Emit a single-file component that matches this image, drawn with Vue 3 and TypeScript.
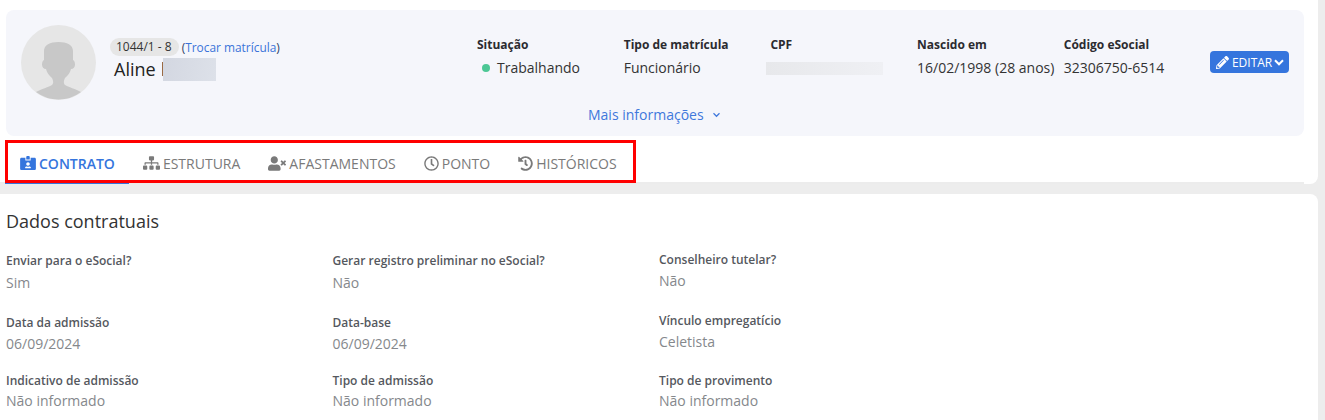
<template>
  <div class="page">
    <section class="top">
      <div class="profile">
        <div class="profile__person">
          <svg class="avatar" viewBox="0 0 75 75">
            <circle cx="37.5" cy="37.5" r="37.5" fill="#e6e6e6" />
            <path
              d="M15 67C20 64 28 62 31 60C33 58 32 55 31 53C28 50 26 48 25 44C22.5 44 21 42 21 39.5C21 37 22 35.5 23 35V26C23 20 29 17 37.5 17C46 17 52 20 52 26V35C53 35.5 54 37 54 39.5C54 42 52.5 44 50 44C49 48 47 50 44 53C43 55 42 58 44 60C47 62 55 64 60 67A37.5 37.5 0 0 1 15 67Z"
              fill="#c8c8c8"
            />
          </svg>
          <div class="person">
            <div class="person__reg">
              <span class="chip">1044/1 - 8</span>
              <span class="swap">(<a>Trocar matrícula</a>)</span>
            </div>
            <div class="person__name">Aline <span class="blur blur--name"></span></div>
          </div>
        </div>

        <div class="info">
          <div v-for="item in infoItems" :key="item.label" class="info__item" :style="{ width: item.width + 'px' }">
            <div class="info__label">{{ item.label }}</div>
            <div v-if="item.label === 'Situação'" class="info__value info__value--status">
              <span class="dot"></span>{{ item.value }}
            </div>
            <div v-else-if="item.label === 'CPF'" class="info__value"><span class="blur blur--cpf"></span></div>
            <div v-else class="info__value">{{ item.value }}</div>
          </div>
          <button class="edit" type="button">
            <svg class="edit__pen" viewBox="0 0 512 512">
              <path fill="currentColor" d="M497.9 142.1l-46.1 46.1c-4.7 4.7-12.3 4.7-17 0l-111-111c-4.7-4.7-4.7-12.3 0-17l46.1-46.1c18.7-18.7 49.1-18.7 67.9 0l60.1 60.1c18.8 18.7 18.8 49.1 0 67.9zM284.2 99.8L21.6 362.4.4 483.9c-2.9 16.4 11.4 30.6 27.8 27.8l121.5-21.3 262.6-262.6c4.7-4.7 4.7-12.3 0-17l-111-111c-4.8-4.7-12.4-4.7-17.1 0zM124.1 339.9c-5.5-5.5-5.5-14.3 0-19.8l154-154c5.5-5.5 14.3-5.5 19.8 0s5.5 14.3 0 19.8l-154 154c-5.5 5.5-14.3 5.5-19.8 0zM88 424h48v36.3l-64.5 11.3-31.1-31.1L51.7 376H88v48z" />
            </svg>
            <span>EDITAR</span>
            <svg class="edit__chev" viewBox="0 0 10 7">
              <path d="M1 1.3l4 4 4-4" fill="none" stroke="currentColor" stroke-width="2" />
            </svg>
          </button>
        </div>

        <div class="more">
          Mais informações
          <svg class="more__chev" viewBox="0 0 10 7">
            <path d="M1.5 1.5L5 5l3.5-3.5" fill="none" stroke="currentColor" stroke-width="1.4" />
          </svg>
        </div>
      </div>

      <nav class="tabs">
        <a v-for="(tab, i) in tabs" :key="tab.label" class="tab" :class="{ 'tab--active': i === 0 }">
          <svg class="tab__icon" :width="tab.w" :height="tab.h" :viewBox="tab.box">
            <path v-for="(d, j) in tab.paths" :key="j" :d="d" fill="currentColor" />
          </svg>
          {{ tab.label }}
        </a>
        <div class="tabs__mark"></div>
      </nav>
    </section>

    <section class="details">
      <h2 class="details__title">Dados contratuais</h2>
      <div class="fields">
        <div v-for="col in columns" :key="col.id" class="fields__col" :class="'fields__col--' + col.id">
          <div v-for="field in col.fields" :key="field.label" class="field">
            <div class="field__label">{{ field.label }}</div>
            <div class="field__value">{{ field.value }}</div>
          </div>
        </div>
      </div>
    </section>
  </div>
</template>

<script setup lang="ts">
const infoItems = [
  { label: 'Situação', value: 'Trabalhando', width: 146.7 },
  { label: 'Tipo de matrícula', value: 'Funcionário', width: 146.7 },
  { label: 'CPF', value: '', width: 146.7 },
  { label: 'Nascido em', value: '16/02/1998 (28 anos)', width: 146.7 },
  { label: 'Código eSocial', value: '32306750-6514', width: 146.2 }
]

const tabs = [
  {
    label: 'CONTRATO',
    w: 16,
    h: 14,
    box: '0 0 576 512',
    paths: [
      'M528 64H384v96H192V64H48C21.5 64 0 85.5 0 112v352c0 26.5 21.5 48 48 48h480c26.5 0 48-21.5 48-48V112c0-26.5-21.5-48-48-48zM288 224c35.3 0 64 28.7 64 64s-28.7 64-64 64-64-28.7-64-64 28.7-64 64-64zm93.3 224H194.7c-10.4 0-18.8-10-15.6-19.8 8.3-25.6 32.4-44.2 60.9-44.2h8.2c12.3 5.1 25.7 8 39.8 8s27.6-2.9 39.8-8h8.2c28.4 0 52.5 18.5 60.9 44.2 3.2 9.8-5.2 19.8-15.6 19.8zM352 32c0-17.7-14.3-32-32-32h-64c-17.7 0-32 14.3-32 32v96h128V32z'
    ]
  },
  {
    label: 'ESTRUTURA',
    w: 17,
    h: 14,
    box: '0 0 640 512',
    paths: [
      'M128 352H32c-17.67 0-32 14.33-32 32v96c0 17.67 14.33 32 32 32h96c17.67 0 32-14.33 32-32v-96c0-17.67-14.33-32-32-32zm-24-80h192v48h48v-48h192v48h48v-57.59c0-21.17-17.23-38.41-38.41-38.41H344v-64h40c17.67 0 32-14.33 32-32V32c0-17.67-14.33-32-32-32H256c-17.67 0-32 14.33-32 32v96c0 17.67 14.33 32 32 32h40v64H94.41C73.23 224 56 241.23 56 262.41V320h48v-48zm264 80h-96c-17.67 0-32 14.33-32 32v96c0 17.67 14.33 32 32 32h96c17.67 0 32-14.33 32-32v-96c0-17.67-14.33-32-32-32zm240 0h-96c-17.67 0-32 14.33-32 32v96c0 17.67 14.33 32 32 32h96c17.67 0 32-14.33 32-32v-96c0-17.67-14.33-32-32-32z'
    ]
  },
  {
    label: 'AFASTAMENTOS',
    w: 18,
    h: 15,
    box: '0 0 640 512',
    paths: [
      'M224 256c70.7 0 128-57.3 128-128S294.7 0 224 0 96 57.3 96 128s57.3 128 128 128zm89.6 32h-16.7c-22.2 10.2-46.9 16-72.9 16s-50.6-5.8-72.9-16h-16.7C60.2 288 0 348.2 0 422.4V464c0 26.5 21.5 48 48 48h352c26.5 0 48-21.5 48-48v-41.6c0-74.2-60.2-134.4-134.4-134.4z',
      'M589.6 240l45.6-45.6c6.3-6.3 6.3-16.5 0-22.8l-22.8-22.8c-6.3-6.3-16.5-6.3-22.8 0L544 194.4l-45.6-45.6c-6.3-6.3-16.5-6.3-22.8 0l-22.8 22.8c-6.3 6.3-6.3 16.5 0 22.8l45.6 45.6-45.6 45.6c-6.3 6.3-6.3 16.5 0 22.8l22.8 22.8c6.3 6.3 16.5 6.3 22.8 0l45.6-45.6 45.6 45.6c6.3 6.3 16.5 6.3 22.8 0l22.8-22.8c6.3-6.3 6.3-16.5 0-22.8L589.6 240z'
    ]
  },
  {
    label: 'PONTO',
    w: 15,
    h: 15,
    box: '0 0 512 512',
    paths: [
      'M256 8C119 8 8 119 8 256s111 248 248 248 248-111 248-248S393 8 256 8zm0 448c-110.5 0-200-89.5-200-200S145.5 56 256 56s200 89.5 200 200-89.5 200-200 200zm61.8-104.4l-84.9-61.7c-3.1-2.3-4.9-5.9-4.9-9.7V116c0-6.6 5.4-12 12-12h32c6.6 0 12 5.4 12 12v141.7l66.8 48.6c5.4 3.9 6.5 11.4 2.6 16.8L334.6 349c-3.9 5.3-11.4 6.5-16.8 2.6z'
    ]
  },
  {
    label: 'HISTÓRICOS',
    w: 15,
    h: 15,
    box: '0 0 512 512',
    paths: [
      'M504 255.531c.253 136.64-111.18 248.372-247.82 248.468-59.015.042-113.223-20.53-155.822-54.911-11.077-8.94-11.905-25.541-1.839-35.607l11.267-11.267c8.609-8.609 22.353-9.551 31.891-1.984C173.062 425.135 212.781 440 256 440c101.705 0 184-82.311 184-184 0-101.705-82.311-184-184-184-48.814 0-93.149 18.969-126.068 49.932l50.754 50.754c10.08 10.08 2.941 27.314-11.313 27.314H24c-8.837 0-16-7.163-16-16V38.627c0-14.254 17.234-21.393 27.314-11.314l49.372 49.372C129.209 34.136 189.552 8 256 8c136.81 0 247.747 110.78 248 247.531zm-180.912 78.784l9.823-12.63c8.138-10.463 6.253-25.542-4.21-33.679L288 256.349V152c0-13.255-10.745-24-24-24h-16c-13.255 0-24 10.745-24 24v135.651l65.409 50.874c10.463 8.137 25.541 6.253 33.679-4.21z'
    ]
  }
]

const columns = [
  {
    id: 'a',
    fields: [
      { label: 'Enviar para o eSocial?', value: 'Sim' },
      { label: 'Data da admissão', value: '06/09/2024' },
      { label: 'Indicativo de admissão', value: 'Não informado' }
    ]
  },
  {
    id: 'b',
    fields: [
      { label: 'Gerar registro preliminar no eSocial?', value: 'Não' },
      { label: 'Data-base', value: '06/09/2024' },
      { label: 'Tipo de admissão', value: 'Não informado' }
    ]
  },
  {
    id: 'c',
    fields: [
      { label: 'Conselheiro tutelar?', value: 'Não' },
      { label: 'Vínculo empregatício', value: 'Celetista' },
      { label: 'Tipo de provimento', value: 'Não informado' }
    ]
  }
]
</script>

<style scoped>
.page {
  width: 1325px;
  height: 420px;
  overflow: hidden;
  background: #ededed;
  font-family: "Open Sans", "Noto Sans", sans-serif;
  color: #2f2f33;
}

.top {
  width: 1318px;
  height: 184px;
  padding: 10px 14px 0 6px;
  box-sizing: border-box;
  background: #fff;
  border-radius: 0 0 8px 0;
}

.profile {
  position: relative;
  height: 126px;
  padding: 15px 15px 0 15px;
  box-sizing: border-box;
  background: #f5f6fb;
  border-radius: 8px;
  display: flex;
  align-items: flex-start;
}

.profile__person {
  flex: none;
  width: 456px;
  display: flex;
  gap: 14px;
}

.avatar {
  width: 75px;
  height: 75px;
  flex: none;
}

.person {
  padding-top: 13px;
}

.person__reg {
  display: flex;
  align-items: center;
  gap: 3px;
  font-size: 12px;
  line-height: 18px;
}

.chip {
  padding: 0 7px 0 6px;
  background: #e6e6e6;
  border-radius: 9px;
  color: #333;
}

.swap {
  color: #2f3d63;
  font-size: 11.9px;
}

.swap a {
  color: #3b74d9;
}

.person__name {
  display: flex;
  align-items: center;
  gap: 7px;
  margin: 2px 0 0 4px;
  font-size: 18px;
  line-height: 23px;
  color: #222;
}

.blur {
  display: block;
}

.blur--name {
  position: relative;
  width: 53px;
  height: 23px;
  background: linear-gradient(100deg, #d3d7e1, #dde1e9);
}

.blur--name::before {
  content: "";
  position: absolute;
  left: -1px;
  top: 4px;
  width: 1px;
  height: 14px;
  background: #9a6a44;
}

.blur--cpf {
  width: 117px;
  height: 13px;
  margin: 9px 0 0 -4px;
  background: linear-gradient(90deg, #e7e8eb, #eff0f4);
}

.info {
  flex: none;
  display: flex;
  align-items: flex-start;
  padding-top: 12px;
}

.info__item {
  flex: none;
}

.info__label {
  font-size: 12px;
  line-height: 16px;
  font-weight: 700;
  color: #2b2b30;
}

.info__value {
  margin-top: 5px;
  font-size: 14px;
  line-height: 20px;
  color: #333;
}

.info__value--status {
  display: flex;
  align-items: center;
  gap: 7px;
  margin-left: 5px;
}

.dot {
  width: 8px;
  height: 8px;
  border-radius: 50%;
  background: #4cc795;
}

.edit {
  display: flex;
  align-items: center;
  gap: 2px;
  height: 22px;
  margin-top: 14px;
  padding: 0 5px 0 6px;
  border: 0;
  border-radius: 4px;
  background: #3575dd;
  color: #fff;
  font-family: inherit;
  font-size: 12px;
}

.edit__pen {
  width: 13px;
  height: 13px;
  margin-right: 1px;
}

.edit__chev {
  width: 10px;
  height: 7px;
}

.more {
  position: absolute;
  left: 582px;
  top: 95px;
  display: flex;
  align-items: center;
  gap: 8px;
  font-size: 14px;
  line-height: 20px;
  color: #3f78dc;
}

.more__chev {
  width: 9px;
  height: 6px;
}

.tabs {
  position: relative;
  display: flex;
  gap: 28px;
  height: 48px;
  margin-left: -6px;
  padding: 8px 0 0 20px;
  box-sizing: border-box;
  align-items: center;
  border-bottom: 2px solid #ececec;
}

.tabs__mark {
  position: absolute;
  left: 5px;
  top: 4px;
  width: 631px;
  height: 43px;
  box-sizing: border-box;
  border: 3px solid #ff0000;
}

.tab {
  display: flex;
  align-items: center;
  gap: 3px;
  font-size: 14px;
  color: #7a7a7a;
  white-space: nowrap;
}

.tab--active {
  color: #3575dd;
  font-weight: 600;
}

.tab--active::after {
  content: "";
  position: absolute;
  left: 5px;
  bottom: -2px;
  width: 124px;
  height: 2px;
  background: #3575dd;
}

.tab__icon {
  flex: none;
}

.details {
  width: 1318px;
  height: 226px;
  margin-top: 10px;
  padding: 15px 6px 0;
  box-sizing: border-box;
  background: #fff;
  border-radius: 0 8px 0 0;
}

.details__title {
  margin: 0;
  font-size: 18px;
  line-height: 24px;
  font-weight: 400;
  color: #333;
}

.fields {
  display: grid;
  grid-template-columns: 326.5px 326.5px 326.5px;
  margin-top: 19px;
}

.fields__col--a,
.fields__col--b {
  padding-top: 1px;
}

.field:nth-child(2) {
  margin-top: 22px;
}

.field:nth-child(3) {
  margin-top: 19px;
}

.fields__col--c .field:nth-child(3) {
  margin-top: 21px;
}

.field__label {
  font-size: 12px;
  line-height: 16px;
  font-weight: 600;
  color: #55585e;
}

.field__value {
  margin-top: 4px;
  font-size: 14px;
  line-height: 20px;
  color: #85888c;
}

.field:nth-child(2) .field__value {
  margin-top: 3px;
}

.field:nth-child(3) .field__value {
  margin-top: 2px;
}

.fields__col--c .field:nth-child(1) .field__value {
  margin-top: 3px;
}
</style>

<style>
html,
body {
  margin: 0;
  background: #ededed;
}
</style>
